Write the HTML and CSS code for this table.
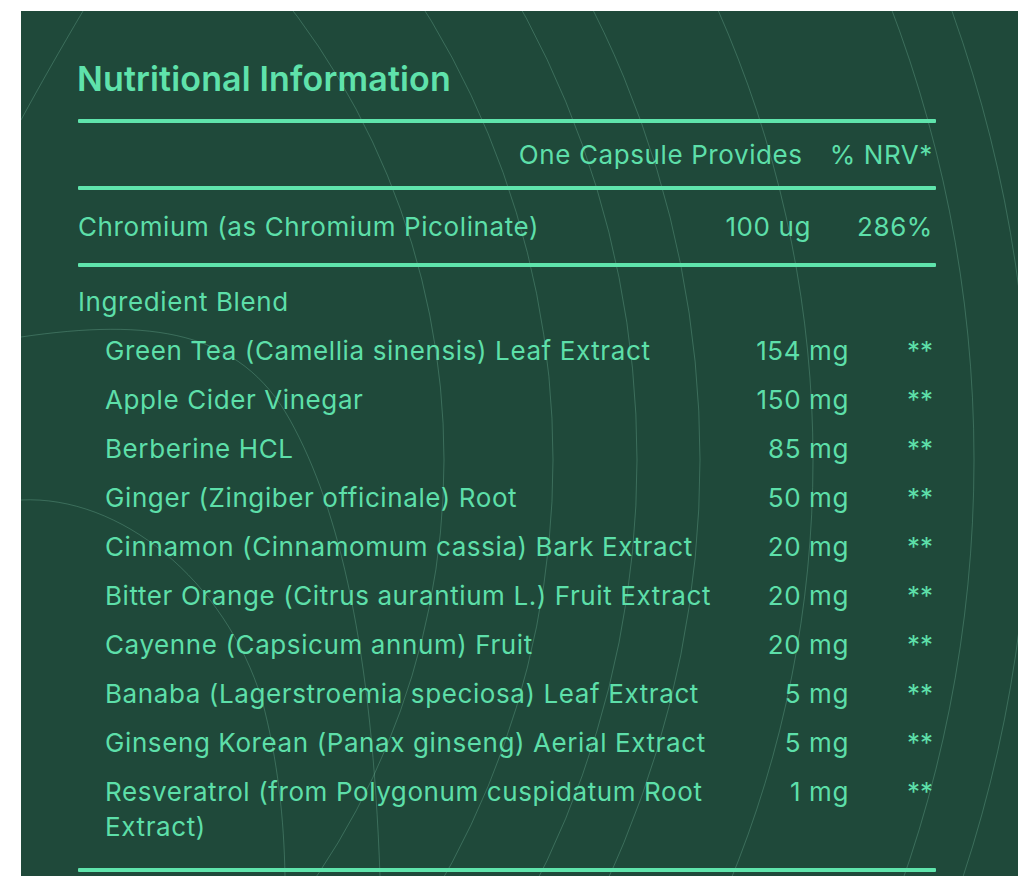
FILE: index.html
```html
<!DOCTYPE html>
<html lang="en">
<head>
<meta charset="utf-8">
<title>Nutritional Information</title>
<link rel="stylesheet" href="styles.css">
</head>
<body>
<section class="panel">
  <svg class="bg-lines" viewBox="0 0 997 865" preserveAspectRatio="none" aria-hidden="true">
    <g transform="translate(-21,-11)" fill="none" stroke="rgba(150,225,195,0.24)" stroke-width="1">
      <circle cx="-300" cy="460" r="744"/>
      <circle cx="-300" cy="460" r="853"/>
      <circle cx="-300" cy="460" r="937"/>
      <circle cx="-300" cy="460" r="1000"/>
      <circle cx="-300" cy="460" r="1113"/>
      <circle cx="-300" cy="460" r="1274"/>
      <circle cx="-300" cy="460" r="1330"/>
      <path d="M83 11 C 60 50, 40 85, 21 120"/>
      <path d="M21 337 C 150 318, 240 330, 290 420 C 340 510, 372 650, 380 876"/>
      <path d="M21 500 C 120 495, 225 580, 262 700 C 278 760, 284 820, 285 876"/>
    </g>
  </svg>
  <h1 class="title">Nutritional Information</h1>
  <div class="table">
    <div class="rule"></div>
    <div class="head-row">
      <span>One Capsule Provides</span>
      <span>% NRV*</span>
    </div>
    <div class="rule"></div>
    <div class="main-row">
      <span class="name">Chromium (as Chromium Picolinate)</span>
      <span class="amount">100 ug</span>
      <span class="nrv">286%</span>
    </div>
    <div class="rule"></div>
    <div class="blend">
      <div class="blend-title">Ingredient Blend</div>
      <div class="blend-row"><span class="name">Green Tea (Camellia sinensis) Leaf Extract</span><span class="amount">154 mg</span><span class="nrv">**</span></div>
      <div class="blend-row"><span class="name">Apple Cider Vinegar</span><span class="amount">150 mg</span><span class="nrv">**</span></div>
      <div class="blend-row"><span class="name">Berberine HCL</span><span class="amount">85 mg</span><span class="nrv">**</span></div>
      <div class="blend-row"><span class="name">Ginger (Zingiber officinale) Root</span><span class="amount">50 mg</span><span class="nrv">**</span></div>
      <div class="blend-row"><span class="name">Cinnamon (Cinnamomum cassia) Bark Extract</span><span class="amount">20 mg</span><span class="nrv">**</span></div>
      <div class="blend-row"><span class="name">Bitter Orange (Citrus aurantium L.) Fruit Extract</span><span class="amount">20 mg</span><span class="nrv">**</span></div>
      <div class="blend-row"><span class="name">Cayenne (Capsicum annum) Fruit</span><span class="amount">20 mg</span><span class="nrv">**</span></div>
      <div class="blend-row"><span class="name">Banaba (Lagerstroemia speciosa) Leaf Extract</span><span class="amount">5 mg</span><span class="nrv">**</span></div>
      <div class="blend-row"><span class="name">Ginseng Korean (Panax ginseng) Aerial Extract</span><span class="amount">5 mg</span><span class="nrv">**</span></div>
      <div class="blend-row"><span class="name">Resveratrol (from Polygonum cuspidatum Root Extract)</span><span class="amount">1 mg</span><span class="nrv">**</span></div>
    </div>
    <div class="rule"></div>
  </div>
</section>
</body>
</html>
```

FILE: styles.css
```css
html, body {
  margin: 0;
  padding: 0;
  background: #ffffff;
}

body {
  padding: 11px 6px 0 21px;
  font-family: Inter, "Noto Sans", "Liberation Sans", sans-serif;
  color: #5ddfa9;
}

.panel {
  position: relative;
  background: #1f493a;
  height: 865px;
  box-sizing: border-box;
  padding: 49px 82px 0 57px;
  overflow: hidden;
}

.bg-lines {
  position: absolute;
  left: 0;
  top: 0;
  width: 100%;
  height: 100%;
  pointer-events: none;
}

.title {
  position: relative;
  margin: 0 0 21px -1px;
  font-size: 34px;
  line-height: 38px;
  font-weight: 600;
  letter-spacing: 0.15px;
  color: #5fe2ab;
}

.table {
  position: relative;
  font-size: 26px;
  line-height: 35px;
  font-weight: 400;
  letter-spacing: 0.6px;
}

.rule {
  height: 4px;
  background: #5fe4ac;
  border-radius: 1px;
}

.head-row {
  display: flex;
  justify-content: flex-end;
  gap: 27px;
  padding: 14px 3px 14px 0;
}

.main-row {
  display: grid;
  grid-template-columns: 1fr auto 122px;
  padding: 19px 3px 19px 0;
}

.amount, .nrv {
  text-align: right;
}

.blend {
  padding: 17px 0 24px 0;
  display: flex;
  flex-direction: column;
  gap: 14px;
}

.blend-row {
  display: grid;
  grid-template-columns: 1fr 109px 84px;
  padding: 0 3px 0 27px;
}

.blend-row .nrv {
  letter-spacing: 0;
}
```
